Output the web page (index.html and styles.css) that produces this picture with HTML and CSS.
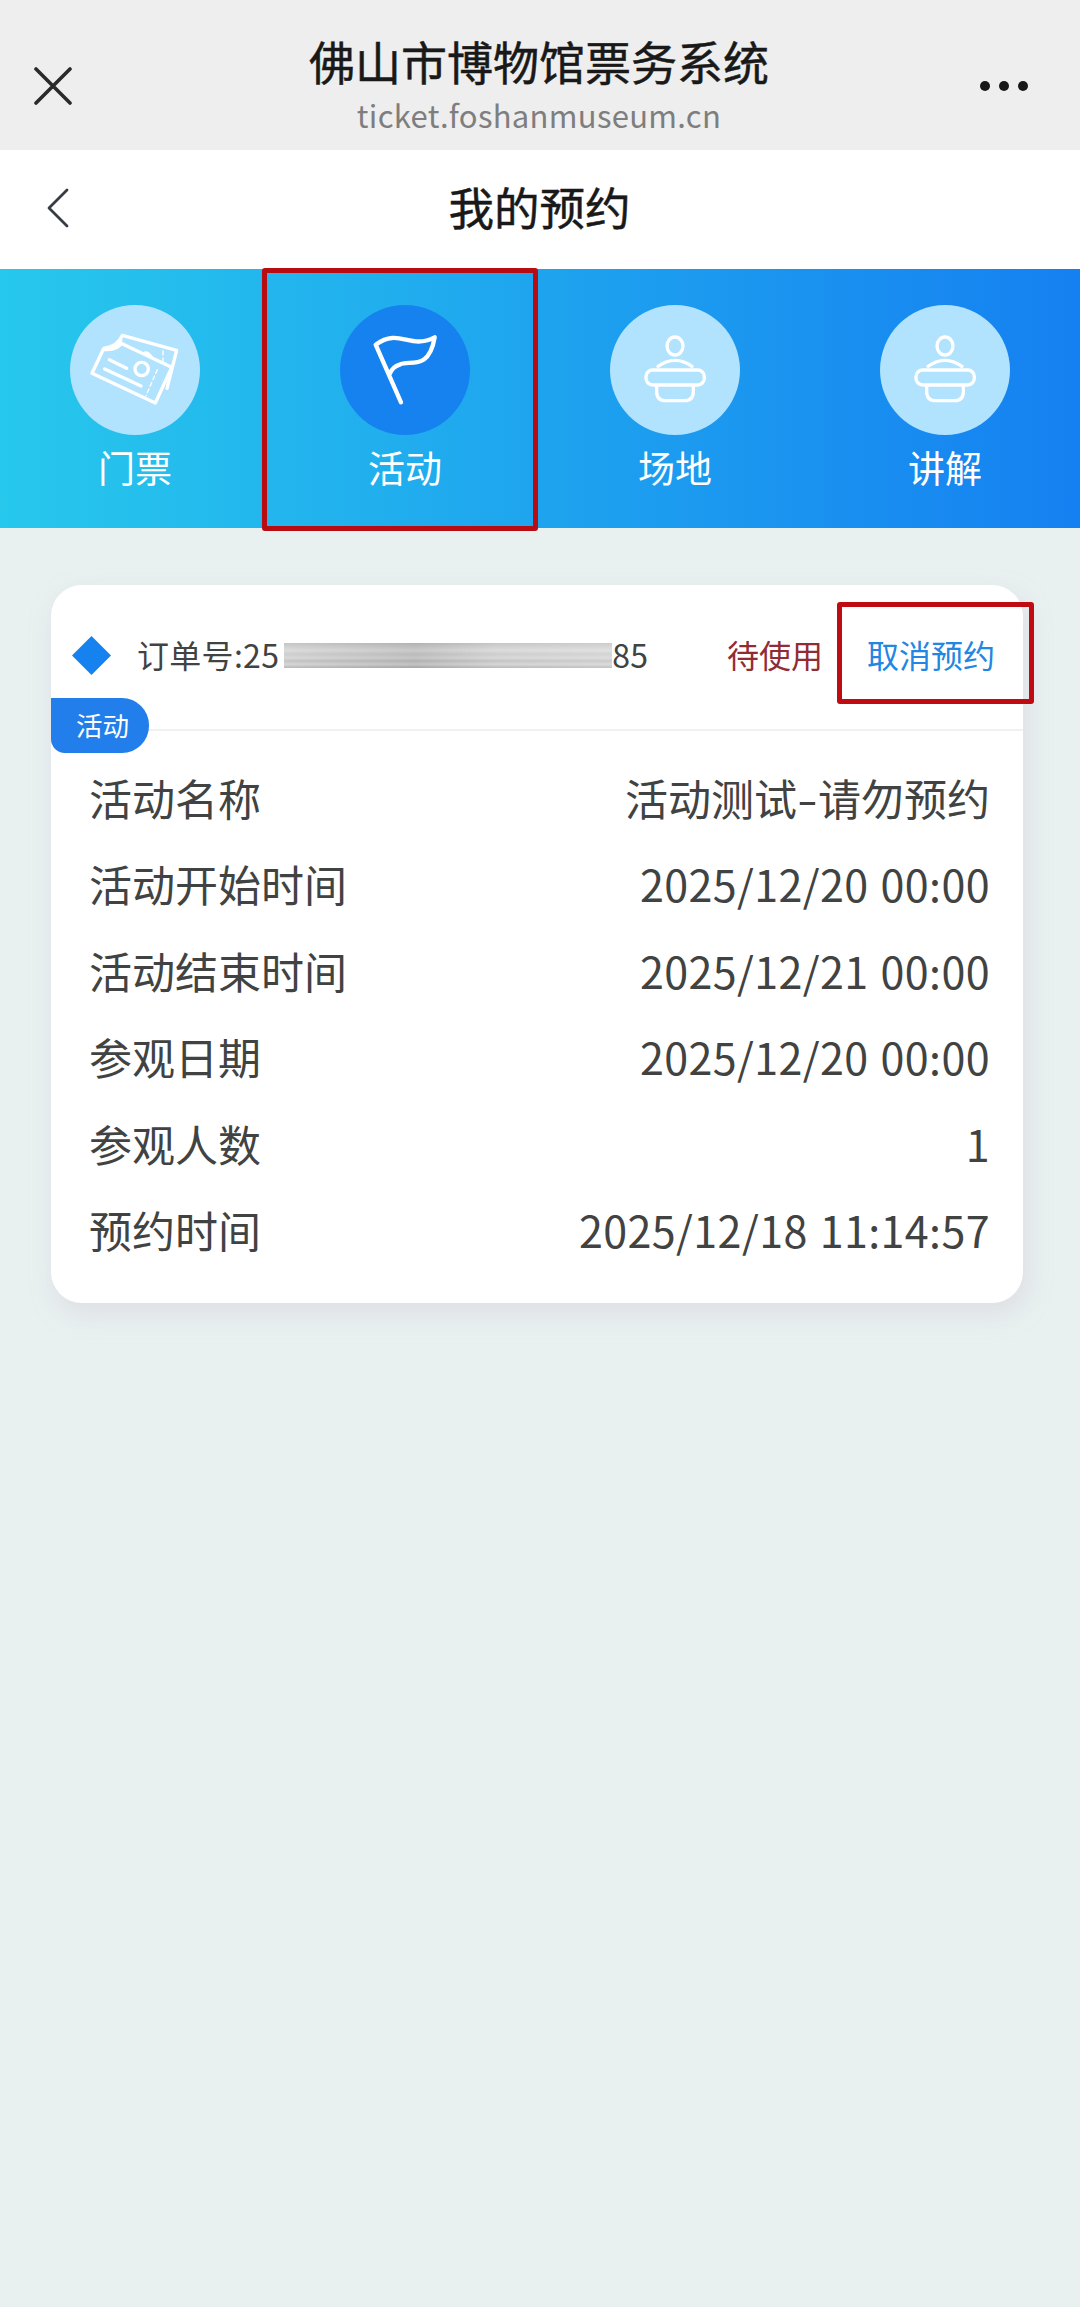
FILE: index.html
```html
<!DOCTYPE html>
<html lang="zh-Hans">
<head>
    <meta charset="UTF-8" />
    <title>佛山市博物馆票务系统</title>
    <link rel="stylesheet" href="styles.css">
</head>
<body>

<!-- 顶部栏 -->
<header class="topbar">
    <svg class="close" viewBox="0 0 38 38"><path d="M2 2 36 36M36 2 2 36"/></svg>
    <div class="site">
        <div class="site-name">佛山市博物馆票务系统</div>
        <div class="site-url">ticket.foshanmuseum.cn</div>
    </div>
    <div class="more"><i></i><i></i><i></i></div>
</header>

<div class="navbar">
    <svg class="back" viewBox="0 0 22 40"><path d="M20 2 2 20 20 38"/></svg>
    <h1>我的预约</h1>
</div>

<!-- 分类 -->
<nav class="tabs">
    <div class="tab">
        <svg class="tab-icon" viewBox="0 0 390 390">
            <path d="M100 133Q142 137 153 115L305 187 256 294 66 205Z"/>
            <path d="M102 130Q143 124 157 91L320 136 291 250" />
            <path class="fill" d="M102 130Q143 124 155 97L156 118Q142 137 100 133Z"/>
            <path class="fill" d="M217 144q18-14 34 17z"/>
            <path class="dash" d="M279 138v36M262 194 228 272"/>
            <path d="M118 164 170 190M104 192 213 243"/>
            <circle cx="215" cy="192" r="20"/>
        </svg>
        <span>门票</span>
    </div>
    <div class="tab active">
        <svg class="tab-icon" viewBox="0 0 390 390">
            <path d="M183 292 107 119C180 67 207 136 284 97C266 203 204 161 179 179Q158 185 149 207"/>
        </svg>
        <span>活动</span>
        <div class="mark"></div>
    </div>
    <div class="tab">
        <svg class="tab-icon" viewBox="0 0 390 390">
            <ellipse cx="195" cy="123" rx="24" ry="27"/>
            <path d="M144 184Q195 148 246 184"/>
            <rect x="108" y="195" width="175" height="45" rx="20"/>
            <path d="M140 242v18q0 27 28 27h54q28 0 28-27v-18"/>
        </svg>
        <span>场地</span>
    </div>
    <div class="tab">
        <svg class="tab-icon" viewBox="0 0 390 390">
            <ellipse cx="195" cy="123" rx="24" ry="27"/>
            <path d="M144 184Q195 148 246 184"/>
            <rect x="108" y="195" width="175" height="45" rx="20"/>
            <path d="M140 242v18q0 27 28 27h54q28 0 28-27v-18"/>
        </svg>
        <span>讲解</span>
    </div>
</nav>

<!-- 订单 -->
<section class="card">
    <div class="card-head">
        <svg class="diamond" viewBox="0 0 39 39"><path d="M19.5 0 39 19.5 19.5 39 0 19.5Z"/></svg>
        <div class="order-no"><span>订单号:25</span><i class="mask"></i><span>85</span></div>
        <span class="status">待使用</span>
        <a class="cancel">取消预约</a>
        <div class="mark"></div>
        <span class="badge">活动</span>
    </div>
    <dl class="info">
        <div><dt>活动名称</dt><dd>活动测试<span class="dash">-</span>请勿预约</dd></div>
        <div><dt>活动开始时间</dt><dd class="num">2025/12/20 00:00</dd></div>
        <div><dt>活动结束时间</dt><dd class="num">2025/12/21 00:00</dd></div>
        <div><dt>参观日期</dt><dd class="num">2025/12/20 00:00</dd></div>
        <div><dt>参观人数</dt><dd class="num">1</dd></div>
        <div><dt>预约时间</dt><dd class="num">2025/12/18 11:14:57</dd></div>
    </dl>
</section>

</body>
</html>
```
FILE: styles.css
```css
* {
    box-sizing: border-box;
}

body {
    margin: 0;
    min-height: 2307px;
    background: #e8f0f0;
    color: #414343;
    font-family: "Noto Sans CJK SC", sans-serif;
}

svg {
    display: block;
    fill: none;
    stroke-linecap: round;
    stroke-linejoin: round;
}

.topbar {
    display: flex;
    align-items: center;
    justify-content: space-between;
    height: 150px;
    padding: 0 52px 0 34px;
    background: #eee;
}

.close {
    width: 38px;
    height: 38px;
    margin-top: 22px;
    stroke: #2a2a2a;
    stroke-width: 3.6;
}

.site {
    margin-left: 26px;
    padding-top: 21px;
    text-align: center;
}

.site-name {
    font-size: 46px;
    line-height: 56px;
    -webkit-text-stroke: 0.5px #191919;
    color: #191919;
}

.site-url {
    padding-top: 3px;
    font-size: 31px;
    line-height: 48px;
    letter-spacing: 0.3px;
    color: #7e7e7e;
}

.more {
    display: flex;
    gap: 9px;
    margin-top: 22px;
}

.more i {
    width: 10px;
    height: 10px;
    border-radius: 50%;
    background: #181818;
}

.navbar {
    position: relative;
    display: flex;
    align-items: center;
    justify-content: center;
    height: 119px;
    background: #fff;
}

.navbar h1 {
    margin: 0;
    padding: 0 1px 8px 0;
    font-size: 45.5px;
    line-height: 60px;
    font-weight: 400;
    -webkit-text-stroke: 0.5px #191919;
    color: #191919;
}

.back {
    position: absolute;
    left: 47px;
    top: 38px;
    width: 22px;
    height: 40px;
    stroke: #363d45;
    stroke-width: 2.8;
}

.tabs {
    display: grid;
    grid-template-columns: repeat(4, 1fr);
    height: 259px;
    background: linear-gradient(90deg, #27c8ec, #1580f1);
}

.tab {
    position: relative;
    display: flex;
    flex-direction: column;
    align-items: center;
    padding-top: 36px;
    color: #fff;
    font-size: 37px;
    line-height: 50px;
}

.tab-icon {
    width: 130px;
    height: 130px;
    margin-bottom: 7px;
    border-radius: 50%;
    background: #b1e3fe;
    stroke: #fff;
    stroke-width: 10;
}

.tab-icon .dash {
    stroke-width: 4;
    stroke-dasharray: 12 9;
}

.tab-icon .fill {
    fill: #fff;
    stroke-width: 2;
}

.active .tab-icon {
    background: #1682f0;
    stroke-width: 13;
}

/* 红色标注框 */
.mark {
    position: absolute;
    border: 5px solid #b80c13;
    border-radius: 3px;
}

.tab .mark {
    inset: -1px 2px -3px -8px;
}

.card {
    width: 972px;
    height: 718px;
    margin: 57px 0 0 51px;
    border-radius: 31px;
    background: #fff;
    box-shadow: 4px 10px 22px rgba(214, 208, 218, 0.5);
}

.card-head {
    position: relative;
    display: flex;
    align-items: center;
    height: 146px;
    padding: 0 28px 4px 21px;
    border-bottom: 2px solid #f1f1f2;
    font-size: 32px;
}

.diamond {
    width: 39px;
    height: 39px;
    margin-right: 26px;
    fill: #1682f0;
}

.order-no {
    display: flex;
    align-items: center;
    letter-spacing: 0.3px;
}

.order-no span,
.status,
.cancel {
    padding-bottom: 3px;
}

.mask {
    width: 328px;
    height: 25px;
    margin: 0 0 0 5px;
    background:
        linear-gradient(90deg, rgba(255, 255, 255, 0.15), rgba(90, 90, 90, 0.1) 40%, rgba(255, 255, 255, 0.15) 65%, rgba(255, 255, 255, 0.25)),
        linear-gradient(#bcbcbc, #d6d6d6 30%, #c6c6c6 45%, #d3d3d3 60%, #bababa 72%, #d0d0d0 85%, #acacac);
}

.status {
    margin-left: auto;
    color: #922c34;
}

.cancel {
    margin-left: 44px;
    color: #2286e2;
}

.card-head .mark {
    left: 786px;
    top: 17px;
    width: 197px;
    height: 102px;
    border-color: #bf0b12;
}

.badge {
    position: absolute;
    left: 0;
    top: 113px;
    width: 98px;
    height: 55px;
    padding-left: 25px;
    border-radius: 0 27px 27px 14px;
    background: #227eeb;
    color: #fff;
    font-size: 26.5px;
    line-height: 54px;
}

.info {
    margin: 0;
    padding: 23px 33px 0 38px;
    font-size: 43px;
}

.info div {
    display: flex;
    justify-content: space-between;
    height: 86.4px;
    line-height: 86.4px;
}

.info dd {
    margin: 0;
}

.info .dash {
    display: inline-block;
    margin: 0 3px;
    transform: scaleX(1.4);
}

.info .num {
    letter-spacing: 0.4px;
    word-spacing: 2px;
}
```
